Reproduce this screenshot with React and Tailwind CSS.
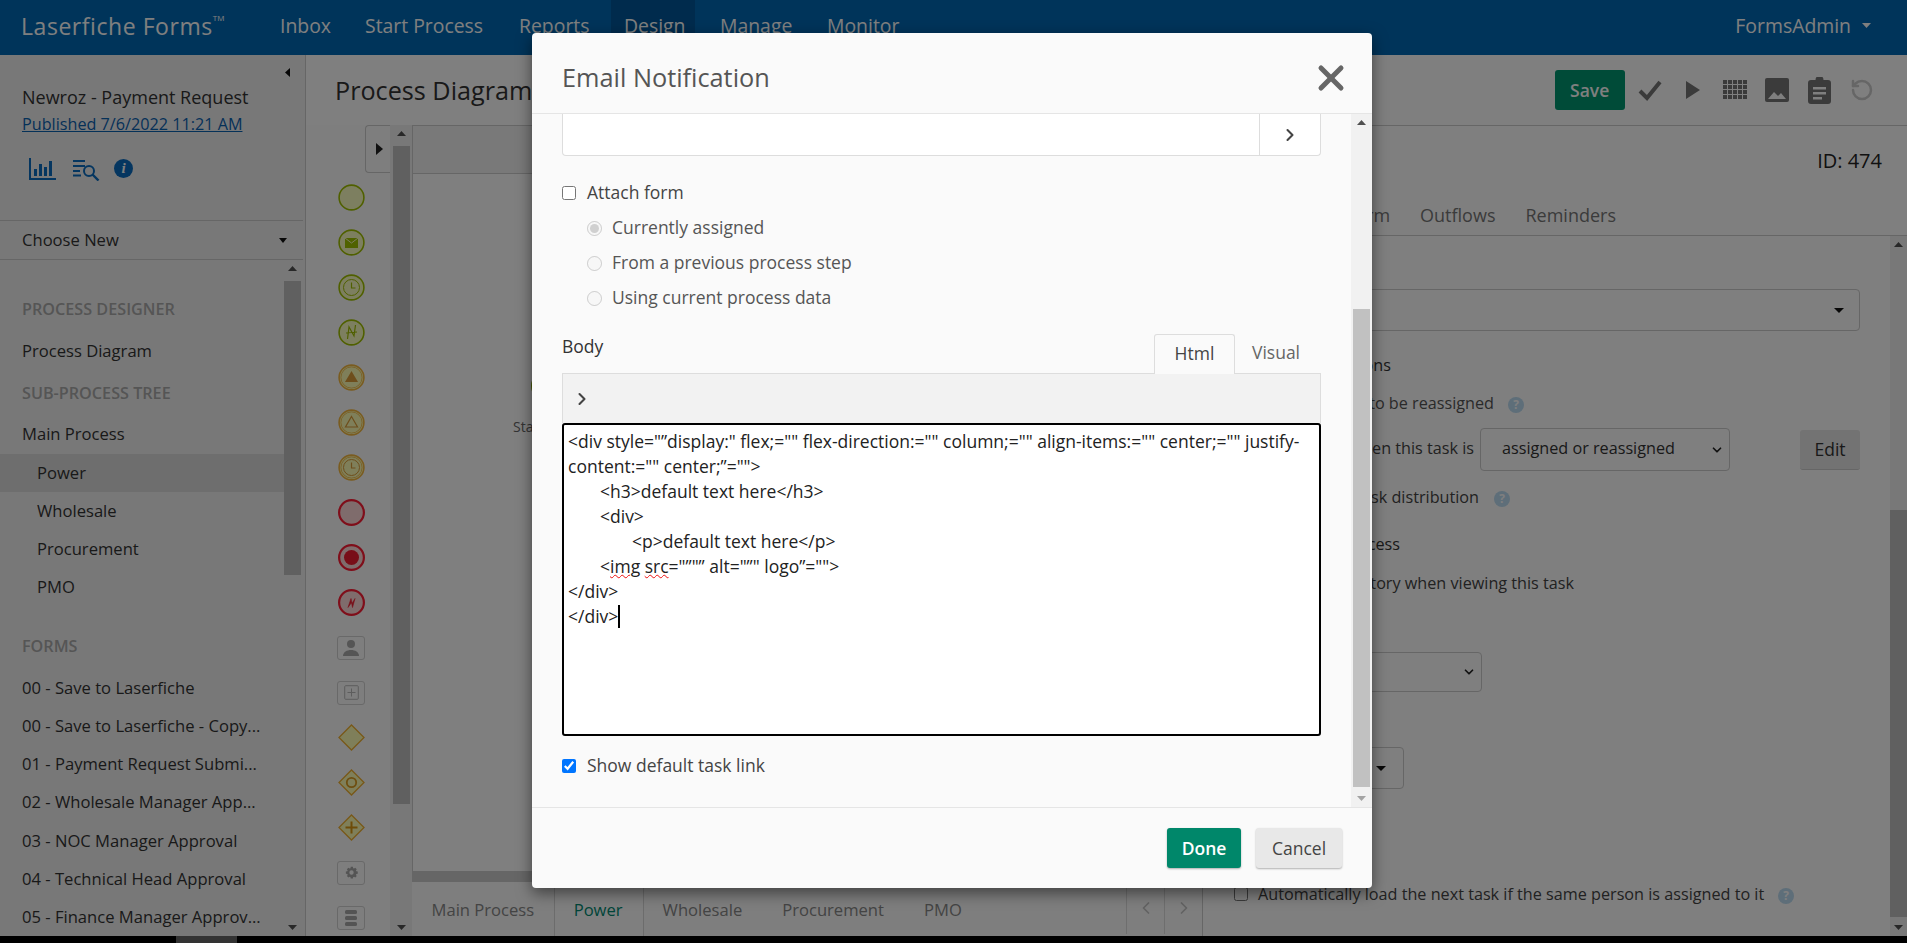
import React from "react";
import { ChevronDown, ChevronLeft, ChevronRight, RotateCcw, X } from "lucide-react";

const Tri = ({ dir = "up", className = "", color = "#505050", w = 10, h = 6 }) => {
  const pts = {
    up: `0,${h} ${w},${h} ${w / 2},0`,
    down: `0,0 ${w},0 ${w / 2},${h}`,
    left: `${w},0 ${w},${h} 0,${h / 2}`,
    right: `0,0 0,${h} ${w},${h / 2}`,
  }[dir];
  return (
    <svg width={w} height={h} viewBox={`0 0 ${w} ${h}`} className={`block shrink-0 ${className}`}>
      <polygon points={pts} fill={color} />
    </svg>
  );
};

const VBar = ({ thumb, outer = "w-[17px]", inner = "w-[17px]", down = "#505050", up = "#505050" }) => (
  <div className={`${outer} shrink-0 bg-[#f1f1f1] flex flex-col items-center`}>
    <div className="h-[17px] shrink-0 w-full flex items-center justify-center">
      <Tri dir="up" w={9} h={5} color={up} />
    </div>
    <div className="flex-1 min-h-0 w-full flex justify-center">
      <div className={`${inner} ${thumb} bg-[#c1c1c1]`} />
    </div>
    <div className="h-[17px] shrink-0 w-full flex items-center justify-center">
      <Tri dir="down" w={9} h={5} color={down} />
    </div>
  </div>
);

const NAV = [
  ["Inbox", "w-[85px]"],
  ["Start Process", "w-[154px]"],
  ["Reports", "w-[105px]"],
  ["Design", "w-[84px] bg-[#00579a] -ml-[13px] pl-[13px]"],
  ["Manage", "w-[107px] ml-[25px]"],
  ["Monitor", "w-[90px]"],
];

const Row = ({ children, className = "" }) => (
  <div className={`h-[38px] flex items-center whitespace-nowrap ${className}`}>{children}</div>
);

const ChartIcon = () => (
  <svg width="27" height="22" viewBox="0 0 27 22" fill="#0a6cc0">
    <rect x="0" y="0" width="2" height="22" />
    <rect x="0" y="20" width="27" height="2" />
    <rect x="5" y="11" width="3" height="7" />
    <rect x="10" y="6" width="3" height="12" />
    <rect x="15" y="9" width="3" height="9" />
    <rect x="20" y="3" width="3" height="15" />
  </svg>
);

const ListSearch = () => (
  <svg width="28" height="22" viewBox="0 0 28 22" fill="none" stroke="#0a6cc0" strokeWidth="2">
    <path d="M1 2h12M1 7h12M1 12h7M1 16.500h8" />
    <circle cx="17" cy="12" r="5" />
    <path d="M20.500 15.500l6 6" strokeWidth="2.400" />
  </svg>
);

const Circle = ({ stroke, fill, sw = 1.6, rings = [], children }) => (
  <svg width="27" height="27" viewBox="0 0 27 27" fill="none">
    <circle cx="13.500" cy="13.500" r={12.400} stroke={stroke} strokeWidth={sw} fill={fill} />
    {rings.map((r) => (
      <circle key={r} cx="13.500" cy="13.500" r={r} stroke={stroke} strokeWidth="0.800" />
    ))}
    {children}
  </svg>
);

const GREEN = "#a0c000";
const GFILL = "#fbffc0";
const ORANGE = "#f4b840";
const OFILL = "#ffffb4";
const RED = "#ff1c34";
const RFILL = "#ffd8d8";

const Clock = ({ c, r = 8 }) => (
  <>
    <circle cx="13.500" cy="13.500" r={r} stroke={c} strokeWidth="1" />
    <path d="M13.500 8.500v5.500h4" stroke={c} strokeWidth="1.200" />
  </>
);

const Box = ({ children }) => (
  <div className="w-[28px] h-[24px] rounded-[3px] border border-[#d2d2d2] flex items-center justify-center">
    {children}
  </div>
);

const Diamond = ({ children, fill = OFILL }) => (
  <svg width="27" height="27" viewBox="0 0 27 27" fill="none">
    <path d="M13.500 1L26 13.500 13.500 26 1 13.500z" stroke="#f0b030" strokeWidth="1.300" fill={fill} />
    {children}
  </svg>
);

const PALETTE = [
  <Circle stroke={GREEN} fill={GFILL} />,
  <Circle stroke={GREEN} fill={GFILL}>
    <rect x="7" y="9" width="13" height="10" fill="#a0c400" />
    <path d="M7 9l6.500 5L20 9" stroke={GFILL} strokeWidth="1" />
  </Circle>,
  <Circle stroke={GREEN} fill={GFILL}><Clock c={GREEN} /></Circle>,
  <Circle stroke={GREEN} fill={GFILL}>
    <path d="M9.500 20l1.500-12 5 9 1.500-11M8 14l11-1" stroke="#a0c000" strokeWidth="1.200" />
  </Circle>,
  <Circle stroke={ORANGE} fill={OFILL} rings={[10.600]}>
    <polygon points="13.500,7 20,18 7,18" fill="#dc9c38" />
  </Circle>,
  <Circle stroke={ORANGE} fill={OFILL} rings={[10.600]}>
    <polygon points="13.500,7.500 19.500,18 7.500,18" stroke="#dc9c38" fill="none" strokeWidth="1.200" />
  </Circle>,
  <Circle stroke={ORANGE} fill={OFILL} rings={[10.600]}><Clock c="#dc9c38" r={8} /></Circle>,
  <Circle stroke={RED} fill={RFILL} sw={2.200} />,
  <Circle stroke={RED} fill={RFILL} sw={2.200}><circle cx="13.500" cy="13.500" r="7.500" fill="#f01c30" /></Circle>,
  <Circle stroke={RED} fill={RFILL} sw={2.200}>
    <path d="M10 18.500l3-9 1 5 3-5-2.500 9-1-5z" fill="#f01c30" stroke="#f01c30" strokeWidth=".6" />
  </Circle>,
  <Box>
    <svg width="20" height="18" viewBox="0 0 20 18" fill="#aaa">
      <circle cx="10" cy="5" r="4" />
      <path d="M2 17c0-4 4-6 8-6s8 2 8 6z" />
    </svg>
  </Box>,
  <Box>
    <svg width="15" height="15" viewBox="0 0 15 15" fill="none" stroke="#bbb" strokeWidth="1">
      <rect x=".7" y=".7" width="13.600" height="13.600" rx="1" />
      <path d="M7.500 3.500v8M3.500 7.500h8" />
    </svg>
  </Box>,
  <Diamond />,
  <Diamond><circle cx="13.500" cy="13.500" r="4.700" stroke="#dc9c20" strokeWidth="1.800" /></Diamond>,
  <Diamond><path d="M13.500 7.500v12M7.500 13.500h12" stroke="#dc9810" strokeWidth="2" /></Diamond>,
  <Box>
    <svg width="15" height="15" viewBox="0 0 24 24" fill="#a8a8a8">
      <path d="M12 8.500a3.500 3.500 0 100 7 3.500 3.500 0 000-7zm10 5.400l-2.300.4-.6 1.500 1.300 1.900-2.400 2.400-1.900-1.300-1.500.6-.4 2.300h-3.400l-.4-2.300-1.500-.6-1.900 1.300-2.400-2.400 1.300-1.900-.6-1.500-2.300-.4v-3.400l2.300-.4.600-1.500-1.300-1.900 2.400-2.400 1.900 1.300 1.500-.6.400-2.300h3.400l.4 2.300 1.500.6 1.900-1.300 2.400 2.400-1.300 1.900.6 1.500 2.300.4z" />
    </svg>
  </Box>,
  <Box>
    <svg width="12" height="16" viewBox="0 0 12 16" fill="#a8a8a8">
      <rect x="0" y="0" width="12" height="4" rx="1.500" />
      <rect x="0" y="6" width="12" height="4" rx="1.500" />
      <rect x="0" y="12" width="12" height="4" rx="1.500" />
    </svg>
  </Box>,
];

const Help = () => (
  <span className="inline-flex w-[16px] h-[16px] rounded-full bg-[#bcdcf2] text-white text-[12px] font-bold items-center justify-center">?</span>
);

const Select = ({ className = "", children, tri }) => (
  <div className={`border border-[#ccc] rounded-[4px] flex items-center shrink-0 ${className}`}>
    {children}
    {tri ? (
      <Tri dir="down" w={10} h={5} color="#111" className="ml-auto" />
    ) : (
      <ChevronDown size={14} strokeWidth={3} color="#222" className="ml-auto" />
    )}
  </div>
);

export default function App() {
  return (
    <div className="w-[1907px] h-[943px] overflow-hidden bg-black font-['Open_Sans',sans-serif] text-[16px] text-[#333]">
      <div className="relative h-[936px] flex flex-col bg-white overflow-hidden">
        <header className="h-[55px] shrink-0 bg-[#0068b5] flex items-center text-white">
          <div className="w-[280px] pl-[21px] shrink-0 text-[23px] tracking-[0.55px] whitespace-nowrap pb-[2px]">
            Laserfiche Forms<sup className="text-[8px] -top-[14px] relative tracking-normal">TM</sup>
          </div>
          <nav className="flex h-full text-[19.400px] font-medium pb-0">
            {NAV.map(([t, c]) => (
              <div key={t} className={`${c} h-full flex items-center shrink-0 whitespace-nowrap pb-[4px]`}>{t}</div>
            ))}
          </nav>
          <div className="ml-auto flex items-center pr-[36px] text-[19.400px] font-medium pb-[4px]">
            FormsAdmin
            <Tri dir="down" w={9} h={5} color="#fff" className="ml-[11px]" />
          </div>
        </header>

        <div className="flex flex-1 min-h-0">
          <aside className="w-[306px] shrink-0 bg-[#f1f1f1] border-r border-[#ccc] flex flex-col text-[16.600px]">
            <div className="h-[165px] shrink-0 pl-[22px] pr-[14px] relative">
              <div className="flex justify-end pt-[13px] pr-[1px] h-[29px]">
                <Tri dir="left" w={5} h={9} color="#111" />
              </div>
              <div className="mt-[1px] h-[24px] leading-[24px] whitespace-nowrap text-[18px]">Newroz - Payment Request</div>
              <div className="mt-[3px] h-[24px] leading-[24px] text-[#0b62b0] underline whitespace-nowrap text-[16.200px]">Published 7/6/2022 11:21 AM</div>
              <div className="mt-[20px] flex items-center">
                <div className="ml-[7px]"><ChartIcon /></div>
                <div className="ml-[16px] mt-[3px]"><ListSearch /></div>
                <div className="ml-[14px] w-[19px] h-[19px] rounded-full bg-[#0a6cc0] text-white text-[15px] font-bold italic font-['Liberation_Serif',serif] flex items-center justify-center">i</div>
              </div>
            </div>
            <div className="h-[40px] shrink-0 border-y border-[#ccc] flex items-center pl-[22px] pr-[16px] mr-[2px]">
              Choose New
              <Tri dir="down" w={8} h={5} color="#111" className="ml-auto" />
            </div>
            <div className="flex flex-1 min-h-0 pr-[4px]">
              <div className="flex-1 min-w-0 pt-[30px] overflow-hidden">
                <Row className="pl-[22px] font-semibold text-[#aaa] text-[16.200px]">PROCESS DESIGNER</Row>
                <Row className="pl-[22px] mt-[4px]">Process Diagram</Row>
                <Row className="pl-[22px] mt-[4px] font-semibold text-[#aaa] text-[16.200px]">SUB-PROCESS TREE</Row>
                <Row className="pl-[22px] mt-[3px]">Main Process</Row>
                <Row className="pl-[37px] mt-[1px] bg-[#dcdcdc]">Power</Row>
                <Row className="pl-[37px]">Wholesale</Row>
                <Row className="pl-[37px]">Procurement</Row>
                <Row className="pl-[37px]">PMO</Row>
                <Row className="pl-[22px] mt-[21px] font-semibold text-[#aaa] text-[16.200px]">FORMS</Row>
                <Row className="pl-[22px] mt-[4px]">00 - Save to Laserfiche</Row>
                <Row className="pl-[22px]">00 - Save to Laserfiche - Copy...</Row>
                <Row className="pl-[22px]">01 - Payment Request Submi...</Row>
                <Row className="pl-[22px]">02 - Wholesale Manager App...</Row>
                <Row className="pl-[22px] mt-[1px]">03 - NOC Manager Approval</Row>
                <Row className="pl-[22px]">04 - Technical Head Approval</Row>
                <Row className="pl-[22px]">05 - Finance Manager Approv...</Row>
              </div>
              <VBar thumb="mt-[4px] h-[294px]" />
            </div>
          </aside>

          <main className="flex-1 min-w-0 flex flex-col">
            <div className="h-[70px] shrink-0 flex items-center pl-[29px] pr-[24px]">
              <h1 className="text-[25.200px] whitespace-nowrap pt-[2px]">Process Diagram</h1>
              <div className="ml-auto flex items-center text-[17.500px]">
                <div className="w-[70px] h-[40px] rounded-[3px] bg-[#009671] text-white font-semibold flex items-center justify-center mr-[4px]">Save</div>
                <div className="w-[42.400px] flex justify-center">
                  <svg width="24" height="22" viewBox="0 0 24 22" fill="none" stroke="#777" strokeWidth="4"><path d="M2 12l7 7L22 3" /></svg>
                </div>
                <div className="w-[42.400px] flex justify-center pl-[2px]"><Tri dir="right" w={14} h={18} color="#777" /></div>
                <div className="w-[42.400px] flex justify-center">
                  <svg width="24" height="20" viewBox="0 0 24 20" fill="#777">
                    {[0, 1, 2, 3].flatMap((r) => [0, 1, 2, 3, 4].map((c) => (
                      <rect key={`${r}-${c}`} x={c * 5} y={r * 5} width="4" height="4" />
                    )))}
                  </svg>
                </div>
                <div className="w-[42.400px] flex justify-center">
                  <svg width="24" height="24" viewBox="0 0 24 24">
                    <rect width="24" height="24" rx="2" fill="#777" />
                    <path d="M3 21l6-7 4 4 3-3 5 6z" fill="#fff" />
                  </svg>
                </div>
                <div className="w-[42.400px] flex justify-center">
                  <svg width="23" height="27" viewBox="0 0 23 27">
                    <path d="M3 3h4.500a4 4 0 018 0H20a3 3 0 013 3v18a3 3 0 01-3 3H3a3 3 0 01-3-3V6a3 3 0 013-3z" fill="#777" />
                    <path d="M5 10h13v2.500H5zM5 15h13v2.500H5zM5 20h9v2.500H5z" fill="#fff" />
                  </svg>
                </div>
                <div className="w-[42.400px] flex justify-center">
                  <RotateCcw size={24} strokeWidth={2.500} color="#ccc" />
                </div>
              </div>
            </div>

            <div className="flex flex-1 min-h-0">
              {/* diagram */}
              <div className="w-[896px] shrink-0 flex">
                <div className="relative w-[84px] shrink-0 bg-[#fcfcfc] pt-[50px] pl-[31px] overflow-hidden">
                  <div className="absolute left-[59px] top-0 w-[26px] h-[48px] rounded-l-[4px] border border-r-0 border-[#ccc] flex items-center pl-[10px]">
                    <Tri dir="right" w={7} h={12} color="#222" />
                  </div>
                  {PALETTE.map((p, i) => (
                    <div key={i} className="h-[45px] w-[28px] flex items-center justify-center">{p}</div>
                  ))}
                </div>
                <VBar outer="w-[22px]" thumb="mt-[4px] h-[658px]" />
                <div className="flex-1 min-w-0 flex flex-col">
                  <div className="relative flex-1 min-h-0 border-l border-t border-[#ccc]">
                    <div className="h-[48px] border-b border-[#ccc] bg-[#f2f2f2]" />
                    <div className="absolute left-[118px] top-[243px] w-[34px] h-[34px] rounded-full border-[3px] border-[#8fb010] bg-[#f6ffbe]" />
                    <div className="absolute left-[100px] top-[290px] text-[14px] text-[#666]">Start</div>
                    <div className="absolute left-0 right-0 bottom-0 h-[11px] bg-[#cdcdcd]" />
                  </div>
                  <div className="h-[54px] shrink-0 flex items-stretch bg-[#fcfcfc] text-[#888] text-[16.600px]">
                    <div className="px-[19.500px] flex items-center whitespace-nowrap pt-[2px]">Main Process</div>
                    <div className="pl-[19px] pr-[20px] flex items-center bg-white border-x border-[#d8d8d8] text-[#008a72] font-medium pt-[2px]">Power</div>
                    <div className="pl-[19px] pr-[20px] flex items-center pt-[2px]">Wholesale</div>
                    <div className="px-[20px] flex items-center pt-[2px]">Procurement</div>
                    <div className="px-[20px] flex items-center pt-[2px]">PMO</div>
                    <div className="ml-auto flex h-[52px]">
                      <div className="w-[38px] border-l border-[#ddd] flex items-center justify-center"><ChevronLeft size={20} color="#c4c4c4" /></div>
                      <div className="w-[38px] border-l border-[#ddd] flex items-center justify-center"><ChevronRight size={20} color="#c4c4c4" /></div>
                    </div>
                  </div>
                </div>
              </div>

              {/* right panel */}
              <div className="flex-1 min-w-0 flex flex-col border-l border-t border-[#ccc] text-[16.200px]">
                <div className="h-[50px] shrink-0 flex items-end justify-end pr-[25px] text-[20px] font-medium text-[#222]">ID: 474</div>
                <div className="h-[60px] shrink-0 border-b border-[#ccc] flex items-center justify-end pr-[291px] pt-[20px] gap-[30px] text-[#777] font-medium text-[18px]">
                  <span>Properties</span>
                  <span>Form</span>
                  <span>Outflows</span>
                  <span>Reminders</span>
                </div>
                <div className="flex-1 min-h-0 flex">
                  <div className="flex-1 min-w-0 pl-[31px] overflow-hidden">
                    <Select tri className="mt-[53px] h-[42px] w-[626px] pr-[15px]" />
                    <div className="mt-[22px] h-[24px] w-[157px] text-right font-medium whitespace-nowrap">Task notifications</div>
                    <div className="mt-[14px] h-[24px] w-[290px] flex items-center whitespace-nowrap">
                      <span className="flex-1 text-right text-[#555]">Allow this task to be reassigned</span>
                      <span className="ml-[14px]"><Help /></span>
                    </div>
                    <div className="mt-[13px] h-[43px] flex items-center whitespace-nowrap">
                      <span className="w-[240px] text-right shrink-0 text-[#444] pb-[2px]">Send email when this task is</span>
                      <Select className="ml-[6px] w-[250px] h-[43px] px-[21px] pr-[5px]"><span className="pb-[2px]">assigned or reassigned</span></Select>
                      <div className="ml-[70px] w-[60px] h-[40px] rounded-[3px] bg-[#e6e6e6] border-b border-[#ccc] font-medium flex items-center justify-center text-[17.500px]">Edit</div>
                    </div>
                    <div className="mt-[14px] h-[24px] flex items-center whitespace-nowrap">
                      <span className="w-[245px] text-right text-[#444]">Enable team task distribution</span>
                      <span className="ml-[15px]"><Help /></span>
                    </div>
                    <div className="mt-[23px] h-[24px] w-[166px] text-right font-medium whitespace-nowrap">Process access</div>
                    <div className="mt-[15px] h-[24px] w-[340px] text-right text-[#444] whitespace-nowrap">Show process history when viewing this task</div>
                    <Select className="mt-[57px] h-[40px] w-[248px] pr-[5px]" />
                    <Select tri className="mt-[55px] h-[42px] w-[170px] pr-[17px]" />
                    <div className="mt-[94px] h-[24px] flex items-center whitespace-nowrap pb-[2px]">
                      <input type="checkbox" className="w-[14px] h-[14px] m-0" />
                      <span className="ml-[10px] text-[#444]">Automatically load the next task if the same person is assigned to it</span>
                      <span className="ml-[14px]"><Help /></span>
                    </div>
                  </div>
                  <VBar thumb="mt-[257px] h-[407px]" />
                </div>
              </div>
            </div>
          </main>
        </div>

        {/* backdrop */}
        <div className="absolute inset-0 bg-black/50" />

        {/* modal */}
        <div className="absolute left-[532px] top-[33px] w-[840px] h-[855px] rounded-[4px] bg-[#fafafa] shadow-[0_5px_15px_rgba(0,0,0,0.5)] flex flex-col overflow-hidden text-[17.500px]">
          <div className="h-[81px] shrink-0 border-b border-[#e5e5e5] flex items-center pl-[30px] pr-[21px]">
            <h2 className="text-[25.300px] font-medium text-[#555] pt-[9px]">Email Notification</h2>
            <X size={40} strokeWidth={3} color="#666" className="ml-auto mt-[9px]" />
          </div>
          <div className="flex-1 min-h-0 flex">
            <div className="flex-1 min-w-0 pl-[30px] pr-[30px] overflow-hidden">
              <div className="h-[42px] flex bg-white border border-t-0 border-[#ddd] rounded-b-[4px]">
                <div className="flex-1" />
                <div className="w-[61px] border-l border-[#ddd] flex items-center justify-center">
                  <ChevronRight size={20} strokeWidth={2.500} color="#444" />
                </div>
              </div>
              <label className="mt-[25px] h-[24px] flex items-center text-[#444]">
                <input type="checkbox" className="w-[14px] h-[14px] m-0" />
                <span className="ml-[11px] pb-[2px]">Attach form</span>
              </label>
              {[
                ["Currently assigned", true],
                ["From a previous process step", false],
                ["Using current process data", false],
              ].map(([t, c]) => (
                <label key={t} className="mt-[11px] ml-[25px] h-[24px] flex items-center text-[#555]">
                  <input type="radio" name="att" disabled defaultChecked={c} className="w-[15px] h-[15px] m-0" />
                  <span className="ml-[10px] pb-[2px]">{t}</span>
                </label>
              ))}
              <div className="mt-[24px] h-[39px] flex items-start">
                <div className="font-medium text-[#333] -mt-[1px]">Body</div>
                <div className="ml-auto flex h-[40px] mr-[4px]">
                  <div className="w-[81px] h-[40px] border border-b-0 border-[#ddd] rounded-t-[3px] bg-[#fafafa] font-medium text-[#444] flex items-center justify-center relative z-10 pb-[3px]">Html</div>
                  <div className="w-[82px] flex items-center justify-center text-[#666] pb-[3px]">Visual</div>
                </div>
              </div>
              <div className="h-[50px] bg-[#f2f2f2] border border-b-0 border-[#ddd] flex items-center pl-[9px]">
                <ChevronRight size={20} strokeWidth={2.500} color="#444" />
              </div>
              <div className="h-[313px] bg-white border-2 border-black rounded-[3px] pl-[4px] pr-[6px] pt-[4px] leading-[25px] text-[#222]">
                <div>{'<div style="”display:" flex;="" flex-direction:="" column;="" align-items:="" center;="" justify-content:="" center;”="">'}</div>
                <div className="pl-[32px]">{"<h3>default text here</h3>"}</div>
                <div className="pl-[32px]">{"<div>"}</div>
                <div className="pl-[64px]">{"<p>default text here</p>"}</div>
                <div className="pl-[32px]">
                  {"<"}
                  <span className="underline decoration-wavy decoration-[#e11] decoration-1">img</span>{" "}
                  <span className="underline decoration-wavy decoration-[#e11] decoration-1">src</span>
                  {'="”"” alt="”" logo”="">'}
                </div>
                <div>{"</div>"}</div>
                <div className="flex items-center">
                  {"</div>"}
                  <span className="inline-block w-[2px] h-[23px] bg-black" />
                </div>
              </div>
              <label className="mt-[18px] h-[24px] flex items-center text-[#444]">
                <input type="checkbox" defaultChecked className="w-[14px] h-[14px] m-0" />
                <span className="ml-[11px] pb-[2px]">Show default task link</span>
              </label>
            </div>
            <VBar outer="w-[21px]" thumb="mt-[178px] h-[478px]" down="#a3a3a3" />
          </div>
          <div className="h-[81px] shrink-0 border-t border-[#e5e5e5] flex items-center justify-end gap-[15px] pr-[30px]">
            <div className="w-[74px] h-[40px] rounded-[3px] bg-[#00876a] text-white font-semibold flex items-center justify-center shadow-[0_1px_2px_rgba(0,0,0,0.3)]">Done</div>
            <div className="w-[86px] h-[40px] rounded-[3px] bg-[#e8e8e8] text-[#444] font-medium flex items-center justify-center shadow-[0_1px_2px_rgba(0,0,0,0.3)]">Cancel</div>
          </div>
        </div>
      </div>
      <div className="h-[7px] flex">
        <div className="ml-[176px] w-[61px] h-full bg-[#333]" />
      </div>
    </div>
  );
}
